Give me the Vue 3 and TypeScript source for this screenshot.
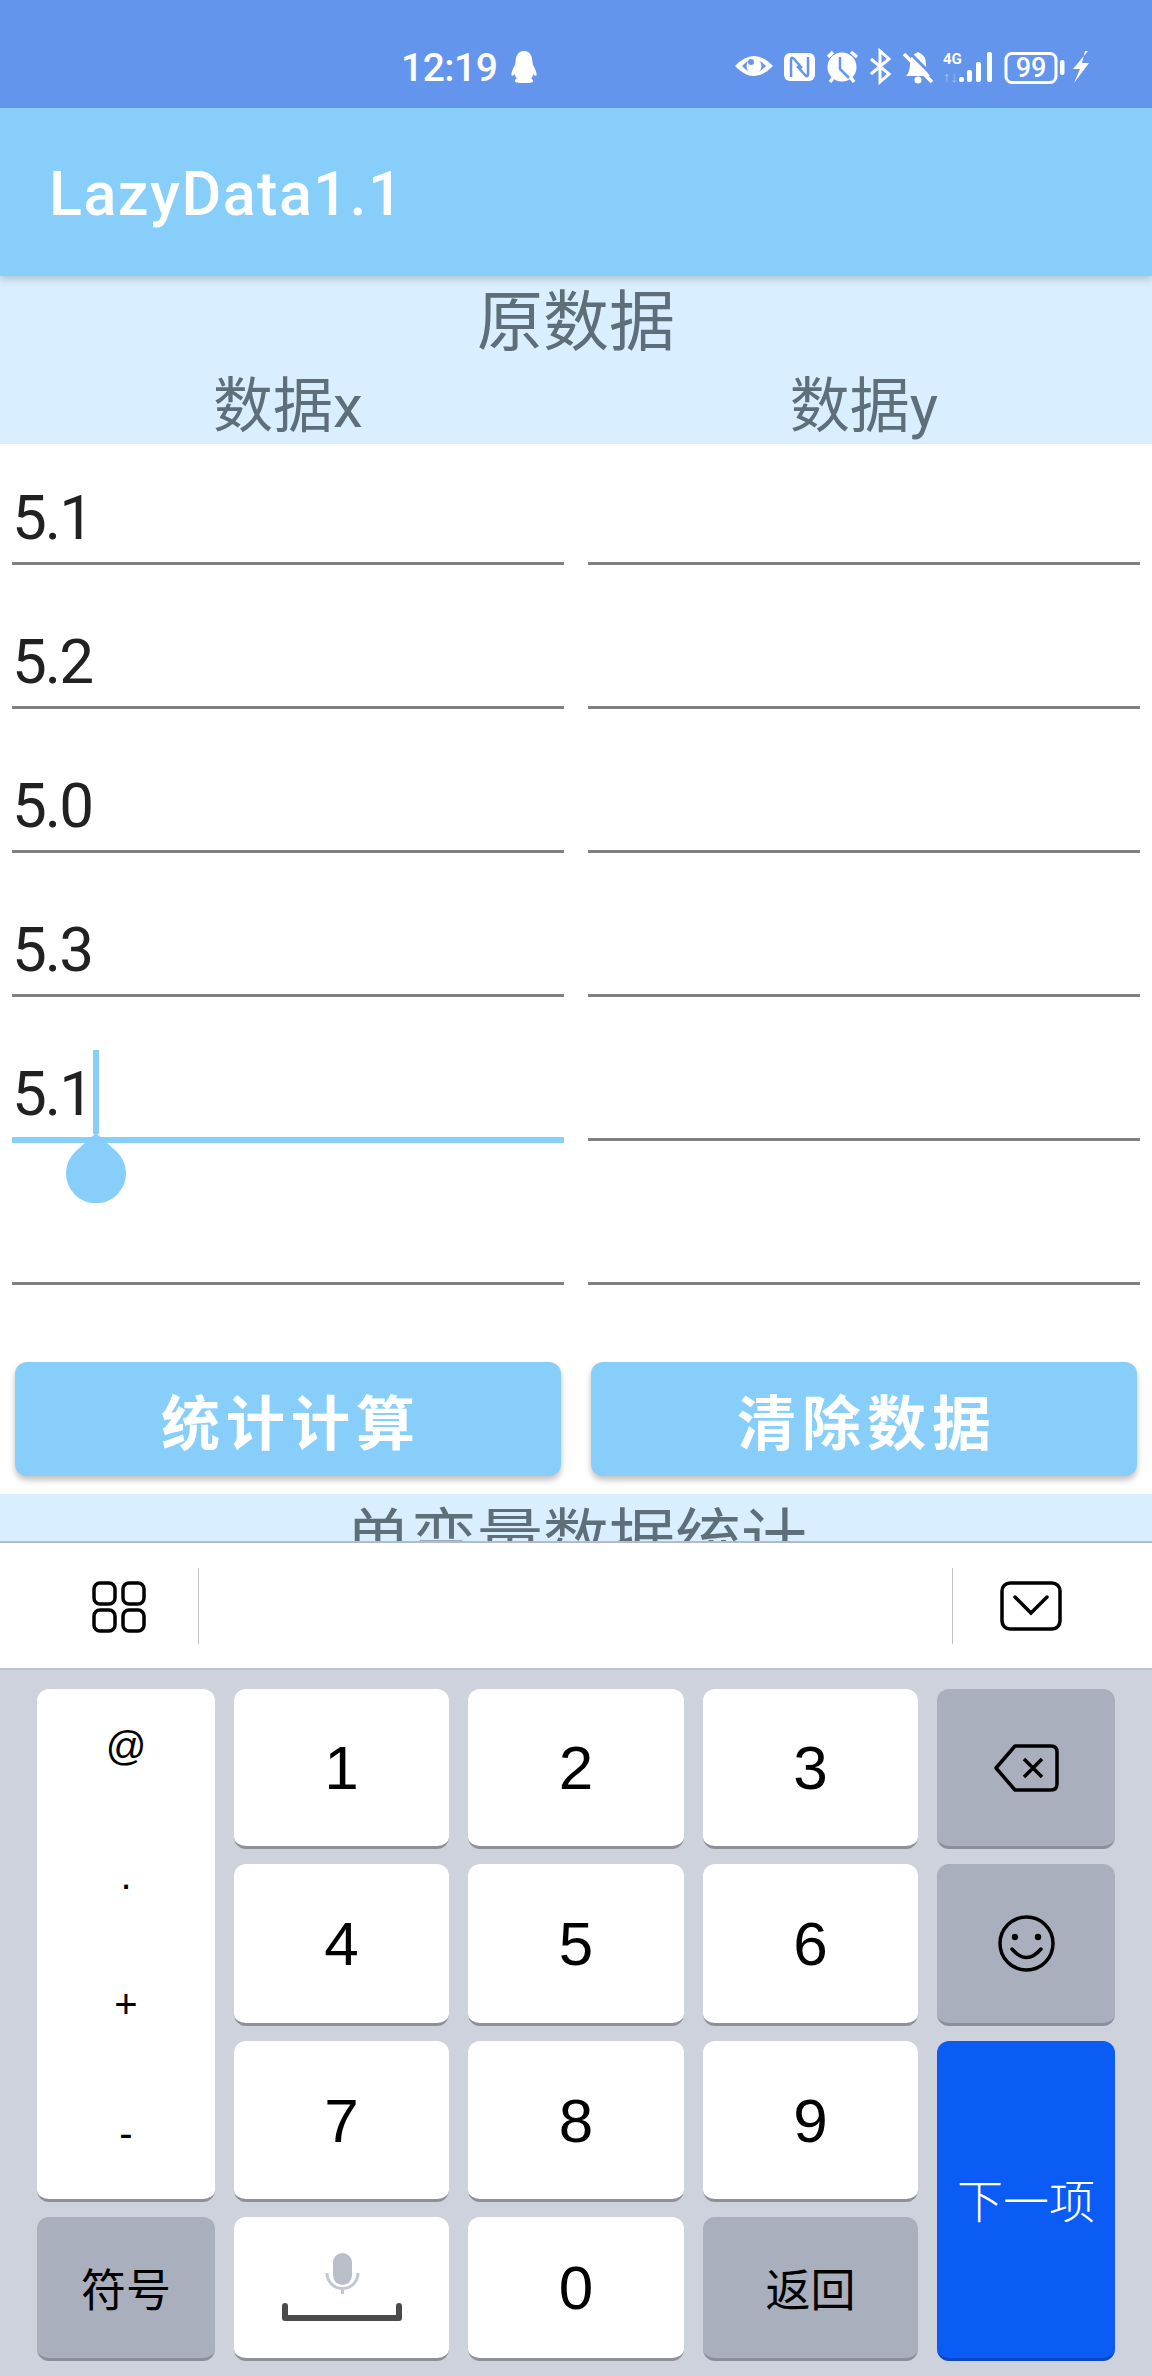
<script setup lang="ts">
interface FieldRow {
  x: string
  active?: boolean
}

const rows: FieldRow[] = [
  {x: '5.1'},
  {x: '5.2'},
  {x: '5.0'},
  {x: '5.3'},
  {x: '5.1', active: true},
  {x: ''},
]

const symbols = ['@', '.', '+', '-']
</script>

<template>
  <div class="phone">
    <div class="status">
      <span class="status__time">12:19</span>
      <svg class="status__qq" width="26" height="32" viewBox="0 0 26 32">
        <path fill="#fff" d="M13 0C6.500 0 4.500 6 4.500 11.500C4.500 13 4 14 3.200 15.500C1.500 18.500 0 22 .500 24.500C1 25.500 2.500 24.500 3.500 23C4 25 5 26.500 6 27.500C4.500 28 3.500 29 4 30.500C4.500 31.500 7 32 13 32C19 32 21.500 31.500 22 30.500C22.500 29 21.500 28 20 27.500C21 26.500 22 25 22.500 23C23.500 24.500 25 25.500 25.500 24.500C26 22 24.500 18.500 22.800 15.500C22 14 21.500 13 21.500 11.500C21.500 6 19.500 0 13 0Z" />
      </svg>
      <svg class="status__icons" width="360" height="40" viewBox="730 48 360 40">
        <path fill="#fff" d="M734 66Q753 46 772 66Q753 86 734 66Z" />
        <path fill="#6495ed" d="M741 66Q753 53 765 66Q753 79 741 66Z" />
        <circle cx="753" cy="66" r="7.500" fill="#fff" />
        <circle cx="750" cy="62" r="3" fill="#6495ed" />

        <rect x="783" y="53" width="31" height="28" rx="6" fill="#fff" />
        <path fill="none" stroke="#6495ed" stroke-width="2.500" d="M790 77V60Q790 56 793 59L801 68M807 57V74Q807 78 804 75L796 66" />

        <circle cx="841" cy="67" r="14.500" fill="#fff" />
        <path fill="none" stroke="#6495ed" stroke-width="2.500" d="M839 57V69L848 78" />
        <path fill="none" stroke="#fff" stroke-width="3.500" d="M827 57L832 52M850 52L856 57M829 82L832 78M853 82L850 78" />

        <path fill="none" stroke="#fff" stroke-width="3" d="M870 59L888 74L879 82V51L888 59L870 74" />

        <path fill="#fff" d="M905 76Q909 72 909 64Q909 55 917 52Q925 55 925 64Q925 72 929 76Z" />
        <circle cx="917" cy="80" r="3.500" fill="#fff" />
        <path fill="none" stroke="#6495ed" stroke-width="3" d="M906 50L934 78" />
        <path fill="none" stroke="#fff" stroke-width="3.500" d="M903 54L931 82" />

        <text x="942" y="64" class="status__net">4G</text>
        <text x="942" y="82" class="status__net status__net_faint">↑↓</text>
        <rect x="958" y="77" width="5" height="5" rx="2" fill="#fff" />
        <rect x="966" y="70" width="5" height="12" rx="2" fill="#fff" />
        <rect x="975" y="62" width="5" height="20" rx="2" fill="#fff" />
        <rect x="986" y="52" width="5" height="30" rx="2" fill="#fff" />

        <rect x="1005" y="53.500" width="50" height="29" rx="6" fill="none" stroke="#fff" stroke-width="3" />
        <text x="1030" y="77" text-anchor="middle" class="status__battery">99</text>
        <rect x="1059" y="60" width="4.500" height="15" rx="2" fill="#fff" />
        <path fill="#fff" d="M1087 51L1072 69H1079L1073 83L1088 63H1081L1084 51Z" />
      </svg>
    </div>

    <div class="main">
      <div class="appbar">LazyData1.1</div>

      <div class="section">
        <div class="section__title">原数据</div>
        <div class="section__cols">
          <div>数据x</div>
          <div>数据y</div>
        </div>
      </div>

      <div class="fields">
        <template v-for="(row, index) in rows" :key="index">
          <div class="field" :class="{field_active: row.active}">
            <span class="field__value">{{ row.x }}</span>
            <template v-if="row.active">
              <i class="field__cursor" />
              <svg class="field__handle" width="60" height="70" viewBox="0 0 60 70">
                <path fill="#87cefa" d="M30 0L10 18A30 30 0 1 0 50 18Z" />
              </svg>
            </template>
          </div>
          <div class="field" />
        </template>
      </div>

      <div class="actions">
        <button class="actions__btn">统计计算</button>
        <button class="actions__btn">清除数据</button>
      </div>

      <div class="section">
        <div class="section__title">单变量数据统计</div>
      </div>
    </div>

    <div class="toolbar">
      <svg class="toolbar__grid" width="56" height="56" viewBox="0 0 56 56">
        <g fill="none" stroke="#000" stroke-width="3.500">
          <rect x="2" y="5" width="21" height="21" rx="6" />
          <rect x="31" y="5" width="21" height="21" rx="6" />
          <rect x="2" y="32" width="21" height="21" rx="6" />
          <rect x="31" y="32" width="21" height="21" rx="6" />
        </g>
      </svg>
      <i class="toolbar__divider toolbar__divider_left" />
      <i class="toolbar__divider toolbar__divider_right" />
      <svg class="toolbar__down" width="62" height="50" viewBox="0 0 62 50">
        <rect x="2" y="2" width="58" height="46" rx="8" fill="none" stroke="#000" stroke-width="3.500" />
        <path d="M15 16L31 32L47 16" fill="none" stroke="#000" stroke-width="3.500" stroke-linecap="round" />
      </svg>
    </div>

    <div class="keyboard">
      <div class="key key_symbols">
        <span v-for="symbol in symbols" :key="symbol">{{ symbol }}</span>
      </div>
      <div class="key">1</div>
      <div class="key">2</div>
      <div class="key">3</div>
      <div class="key key_gray">
        <svg width="66" height="48" viewBox="0 0 66 48">
          <path d="M22 2H58Q64 2 64 8V40Q64 46 58 46H22L3 24Z" fill="none" stroke="#000" stroke-width="3.500" stroke-linejoin="round" />
          <path d="M31 15L49 33M49 15L31 33" fill="none" stroke="#000" stroke-width="3.500" />
        </svg>
      </div>
      <div class="key">4</div>
      <div class="key">5</div>
      <div class="key">6</div>
      <div class="key key_gray">
        <svg width="57" height="57" viewBox="0 0 57 57">
          <circle cx="28.500" cy="28.500" r="26.500" fill="none" stroke="#000" stroke-width="3.500" />
          <circle cx="17" cy="22" r="3.200" />
          <circle cx="40" cy="22" r="3.200" />
          <path d="M14 34Q28.500 51 43 34" fill="none" stroke="#000" stroke-width="3.500" stroke-linecap="round" />
        </svg>
      </div>
      <div class="key">7</div>
      <div class="key">8</div>
      <div class="key">9</div>
      <div class="key key_next">下一项</div>
      <div class="key key_gray key_label">符号</div>
      <div class="key">
        <svg width="120" height="70" viewBox="0 0 120 70">
          <rect x="51" y="0" width="19" height="32" rx="9.500" fill="#b9bec9" />
          <path d="M45 20A15.500 15.500 0 0 0 76 20M60.500 36V41" fill="none" stroke="#c3c7d0" stroke-width="3" />
          <path d="M3 53V65H117V53" fill="none" stroke="#4b4b4d" stroke-width="6" stroke-linecap="round" stroke-linejoin="round" />
        </svg>
      </div>
      <div class="key">0</div>
      <div class="key key_gray key_label">返回</div>
    </div>
  </div>
</template>

<style scoped>
.phone {
  width: 1152px;
  height: 2376px;
  overflow: hidden;
  display: flex;
  flex-direction: column;
  background-color: #fff;
  font-family: Roboto, "Noto Sans CJK SC", sans-serif;
}

.status {
  height: 108px;
  flex: none;
  box-sizing: border-box;
  display: flex;
  padding: 48px 0 0 401px;
  background-color: #6495ed;
  color: #fff;
}

.status__time {
  font-size: 39px;
  line-height: 40px;
  font-weight: 500;
  letter-spacing: -0.5px;
}

.status__qq {
  margin: 3px 0 0 14px;
}

.status__icons {
  margin-left: 194px;
}

.status__net {
  font: 700 15px "Roboto", sans-serif;
  fill: #fff;
}

.status__net_faint {
  opacity: 0.4;
}

.status__battery {
  font: 500 27px "Roboto", sans-serif;
  fill: #fff;
}

.main {
  height: 1433px;
  flex: none;
  overflow: hidden;
}

.appbar {
  position: relative;
  z-index: 1;
  height: 168px;
  box-sizing: border-box;
  padding-left: 49px;
  background-color: #87cefa;
  box-shadow: 0 3px 8px rgba(0, 0, 0, 0.2);
  color: #fff;
  font-size: 61px;
  font-weight: 500;
  line-height: 172px;
  letter-spacing: 1.5px;
}

.section {
  background-color: #d9efff;
  color: #5f6f7a;
  text-align: center;
}

.section__title {
  font-size: 66px;
  line-height: 94px;
}

.section__cols {
  display: grid;
  grid-template-columns: 1fr 1fr;
  height: 74px;
  font-size: 60px;
  line-height: 74px;
}

.fields {
  display: grid;
  grid-template-columns: 552px 552px;
  grid-auto-rows: 121px;
  gap: 23px 24px;
  padding: 0 12px;
}

.field {
  position: relative;
  box-sizing: border-box;
  border-bottom: 3px solid #808080;
  color: #212121;
  font-size: 62px;
  line-height: 96px;
}

.field_active {
  border-bottom: 6px solid #87cefa;
  margin-bottom: -2px;
}

.field__value {
  display: block;
  padding-top: 26px;
  letter-spacing: -2px;
}

.field__cursor {
  position: absolute;
  left: 81px;
  top: 30px;
  width: 6px;
  height: 84px;
  background-color: #87cefa;
}

.field__handle {
  position: absolute;
  left: 54px;
  top: 113px;
}

.actions {
  display: flex;
  justify-content: space-between;
  padding: 77px 15px 18px;
}

.actions__btn {
  width: 546px;
  height: 114px;
  border: none;
  border-radius: 12px;
  padding: 0 0 0 6px;
  background-color: #87cefa;
  box-shadow: 0 4px 6px rgba(0, 0, 0, 0.25);
  color: #fff;
  font-family: inherit;
  font-size: 59px;
  font-weight: 700;
  letter-spacing: 6px;
}

.toolbar {
  height: 129px;
  flex: none;
  box-sizing: border-box;
  display: flex;
  align-items: center;
  border-top: 2px solid #b3bac8;
  border-bottom: 2px solid #c0c3c8;
  background-color: #fff;
}

.toolbar__grid {
  margin-left: 92px;
}

.toolbar__divider {
  width: 1px;
  height: 76px;
  background-color: #c4c4c4;
}

.toolbar__divider_left {
  margin-left: 50px;
}

.toolbar__divider_right {
  margin-left: 753px;
}

.toolbar__down {
  margin-left: 47px;
}

.keyboard {
  flex: 1;
  display: grid;
  grid-template-columns: 178px 215px 216px 215px 178px;
  grid-template-rows: 160px 162px 161px 144px;
  gap: 15px 19px;
  padding: 19px 37px 0;
  background-color: #cdd2dc;
}

.key {
  box-sizing: border-box;
  display: flex;
  align-items: center;
  justify-content: center;
  border-bottom: 3px solid #8e9098;
  border-radius: 12px;
  background-color: #fff;
  color: #000;
  font-family: "Liberation Sans", Arial, sans-serif;
  font-size: 62px;
}

.key_gray {
  border-bottom-color: #8b8e9b;
  background-color: #a9afbc;
}

.key_label {
  font-family: "Noto Sans CJK SC", sans-serif;
  font-size: 45px;
}

.key_symbols {
  grid-row: span 3;
  flex-direction: column;
  justify-content: space-between;
  padding: 35px 0 43px;
  font-size: 40px;
}

.key_next {
  grid-row: span 2;
  padding-bottom: 4px;
  border-bottom-color: #0b46c4;
  background-color: #0a5cf5;
  color: #fff;
  font-family: "Noto Sans CJK SC", sans-serif;
  font-size: 46px;
  font-weight: 300;
}
</style>
